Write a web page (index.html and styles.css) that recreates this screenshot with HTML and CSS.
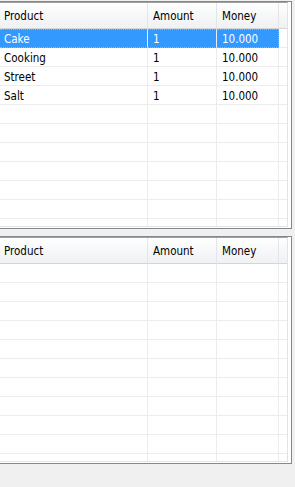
FILE: index.html
```html
<!DOCTYPE html>
<html>
<head>
  <title>Order Lists</title>
  <link rel="stylesheet" href="styles.css">
</head>
<body>

  <div class="grid-panel">
    <div class="grid">
      <table class="grid-table">
        <thead>
          <tr>
            <th class="col-product">Product</th>
            <th class="col-amount">Amount</th>
            <th class="col-money">Money</th>
            <th class="col-fill"></th>
          </tr>
        </thead>
        <tbody id="orderRows"></tbody>
      </table>
    </div>
  </div>

  <div class="grid-panel">
    <div class="grid">
      <table class="grid-table">
        <thead>
          <tr>
            <th class="col-product">Product</th>
            <th class="col-amount">Amount</th>
            <th class="col-money">Money</th>
            <th class="col-fill"></th>
          </tr>
        </thead>
        <tbody id="cartRows"></tbody>
      </table>
    </div>
  </div>

  <script>
    let orders = [
      { product: "Cake", amount: 1, money: "10.000" },
      { product: "Cooking", amount: 1, money: "10.000" },
      { product: "Street", amount: 1, money: "10.000" },
      { product: "Salt", amount: 1, money: "10.000" }
    ];

    // fill a grid body, padding with empty rows so the grid lines reach the bottom
    function fillRows(tbody, items, total) {
      for (let i = 0; i < total; i++) {
        let item = items[i] || { product: "", amount: "", money: "" };
        let row = tbody.insertRow();
        if (i === 0 && items.length > 0) row.className = "selected";
        row.insertCell().textContent = item.product;
        row.insertCell().textContent = item.amount;
        row.insertCell().textContent = item.money;
        row.insertCell();
      }
    }

    fillRows(document.getElementById("orderRows"), orders, 12);
    fillRows(document.getElementById("cartRows"), [], 12);
  </script>

</body>
</html>
```

FILE: styles.css
```css
body {
  margin: 0;
  padding-top: 1px;
  background-color: #f0f0f0;
  font-family: "DejaVu Sans Condensed", "DejaVu Sans", sans-serif;
  font-size: 11.5px;
  color: #000;
}
.grid-panel {
  width: 288px;
  padding: 0 3px 1px 0;
  background-color: #fff;
  border: 1px solid #828790;
  border-left: none;
  margin-bottom: 7px;
}
.grid {
  height: 223px;
  overflow: hidden;
  border-top: 1px solid #a0a0a0;
  border-right: 1px solid #e3e3e3;
  border-bottom: 1px solid #e3e3e3;
  width: 287px;
}
.grid-table {
  border-collapse: separate;
  border-spacing: 0;
  table-layout: fixed;
  width: 287px;
}
.col-product { width: 148px; }
.col-amount { width: 69px; }
.col-money { width: 62px; }
.col-fill { width: 8px; }
th, td {
  box-sizing: border-box;
  text-align: left;
  white-space: nowrap;
  overflow: hidden;
  padding: 1px 0 0 5px;
}
th:first-child, td:first-child {
  padding-left: 4px;
}
th {
  height: 26px;
  font-weight: normal;
  background: linear-gradient(#ffffff, #f7f8f9 45%, #f0f1f2);
  border-right: 1px solid #e3e5e8;
  border-bottom: 1px solid #d5d5d5;
}
th:last-child, td:last-child {
  border-right: none;
}
td {
  height: 19px;
  border-right: 1px solid #ececec;
  border-bottom: 1px solid #ececec;
}
tr.selected td {
  background-color: #3399ff;
  color: #fff;
  border-top: 1px dotted #f0a040;
  border-bottom: 1px dotted #f0a040;
  border-right-color: #e8eef8;
  padding-top: 0;
}
tr.selected td:nth-child(3) {
  border-right: 1px dotted #f0a040;
}
tr.selected td:last-child {
  background-color: #fff;
  border-top: none;
  border-bottom: 1px solid #ececec;
}
```
